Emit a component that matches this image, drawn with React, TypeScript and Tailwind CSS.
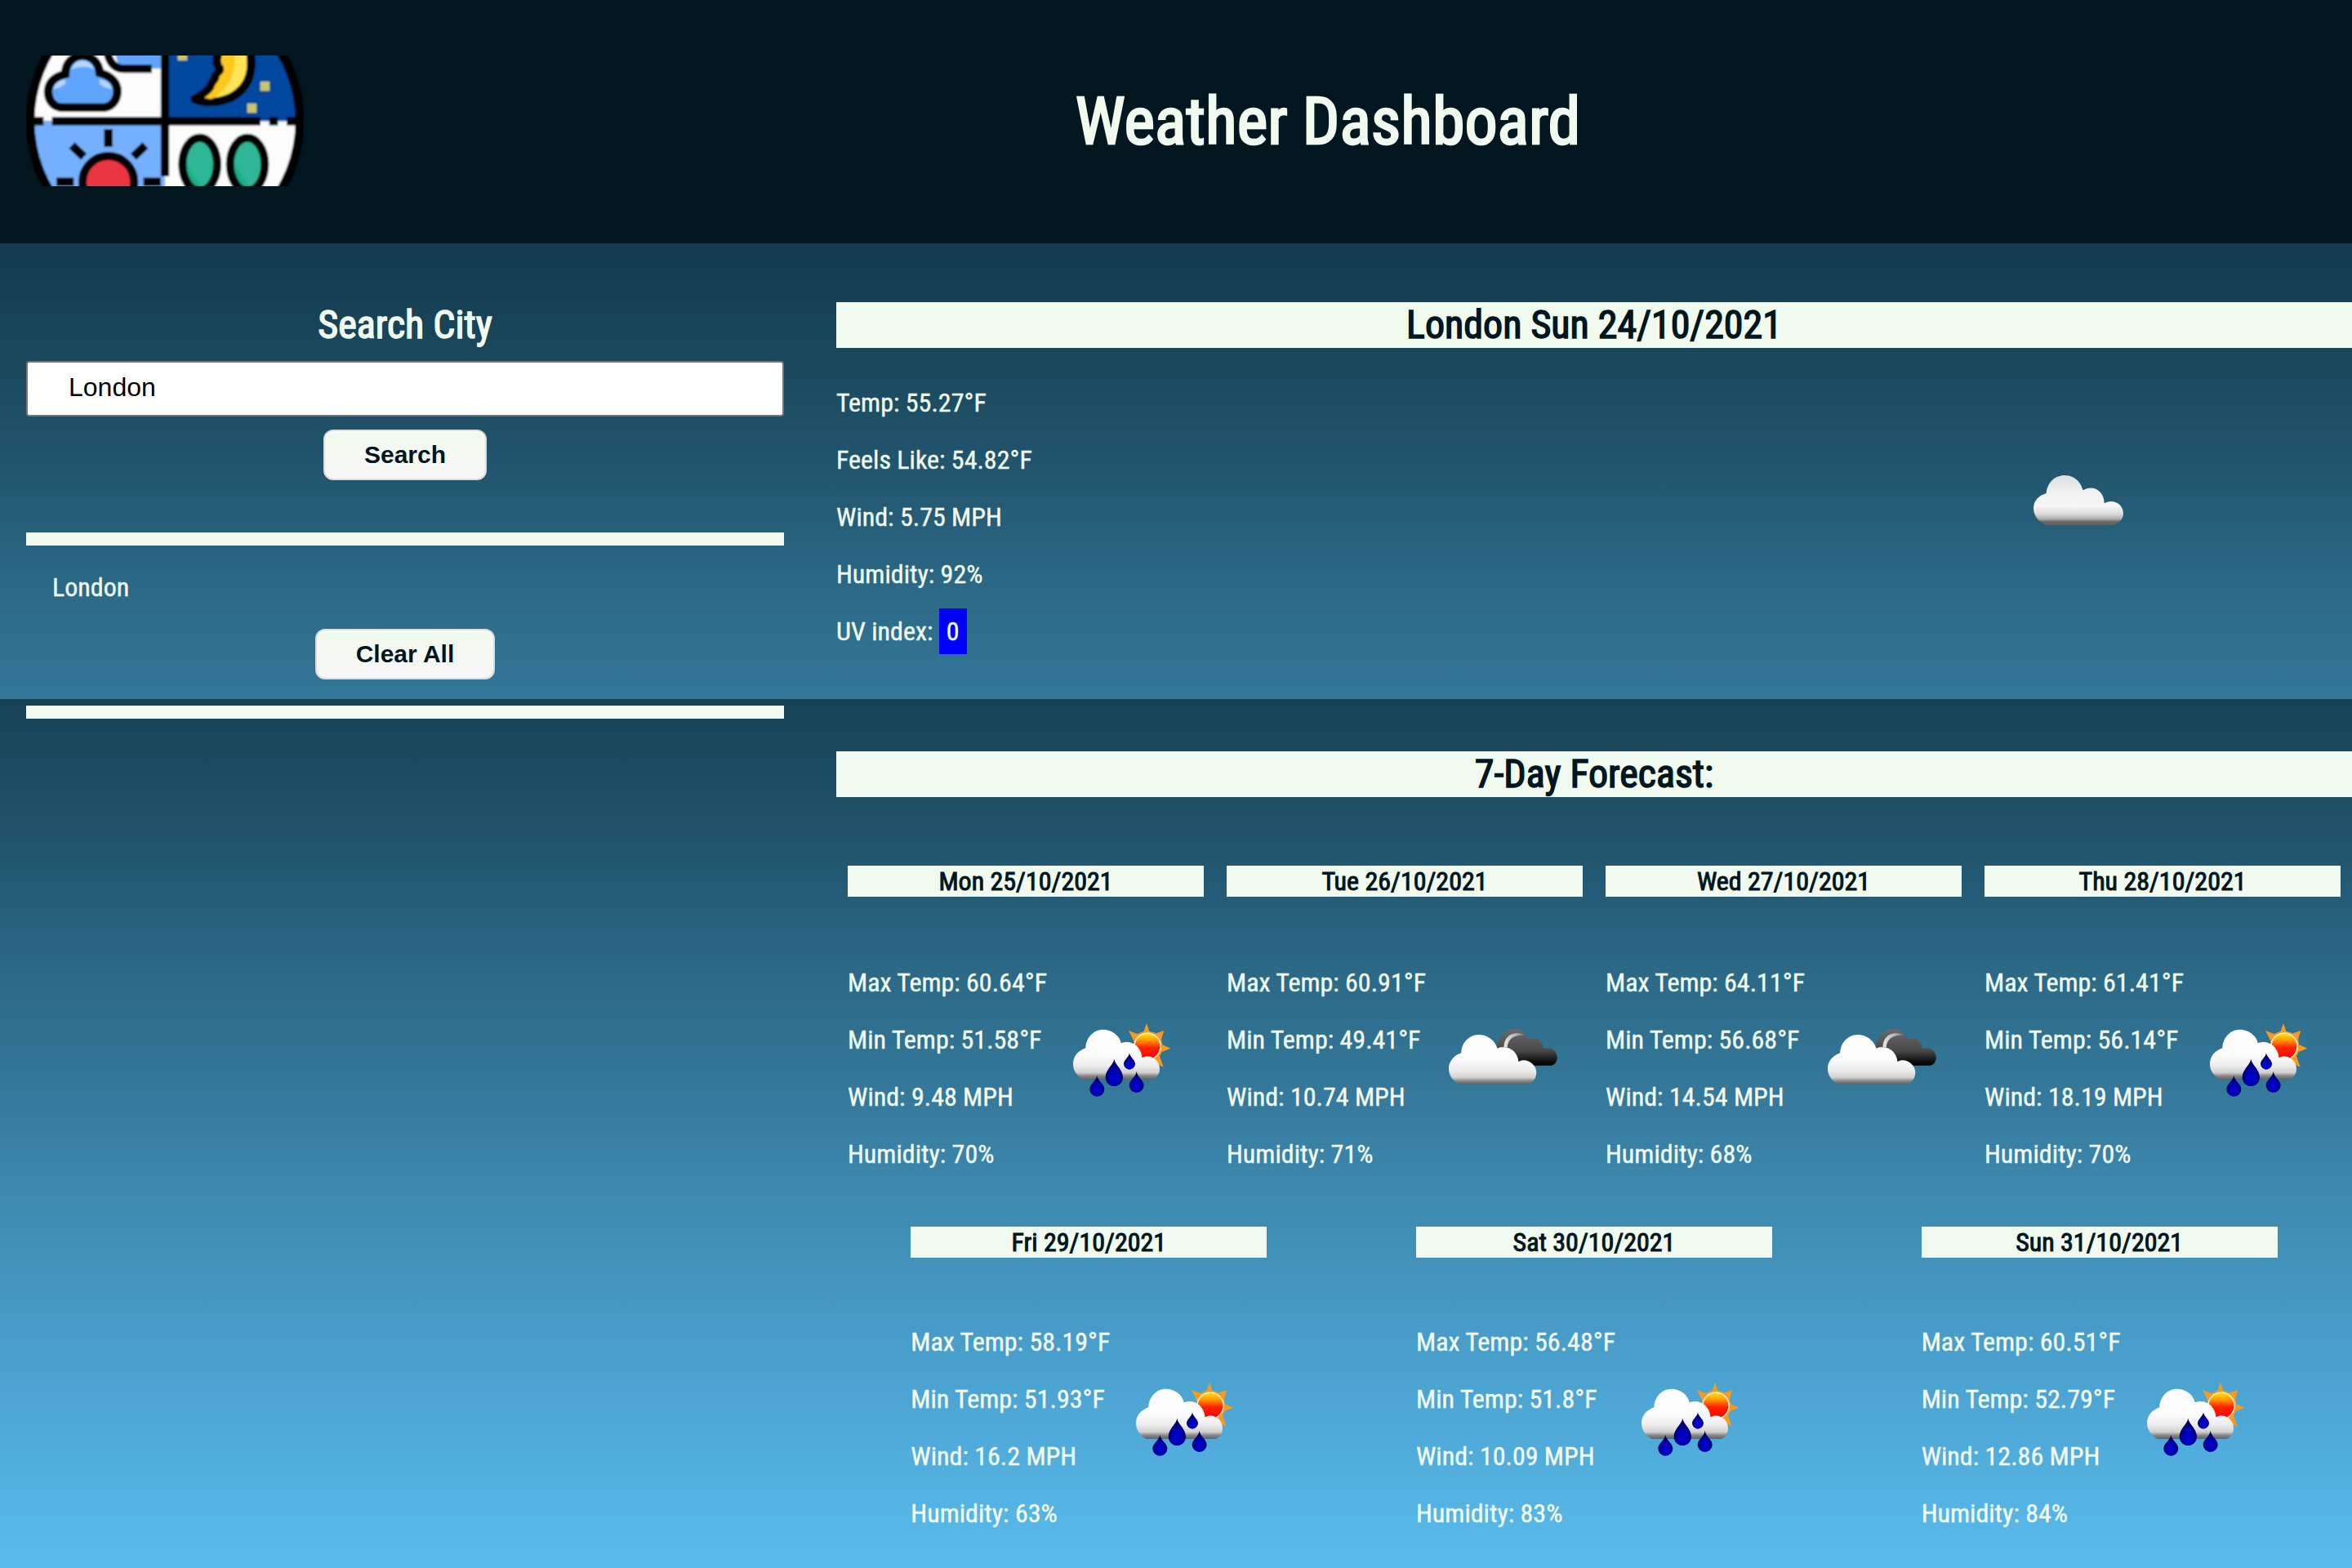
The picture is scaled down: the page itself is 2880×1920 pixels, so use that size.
import React from "react";

type IconKind = "rain" | "clouds";

interface Day {
  date: string;
  max: string;
  min: string;
  wind: string;
  humidity: string;
  icon: IconKind;
}

const firstRow: Day[] = [
  { date: "Mon 25/10/2021", max: "60.64", min: "51.58", wind: "9.48", humidity: "70", icon: "rain" },
  { date: "Tue 26/10/2021", max: "60.91", min: "49.41", wind: "10.74", humidity: "71", icon: "clouds" },
  { date: "Wed 27/10/2021", max: "64.11", min: "56.68", wind: "14.54", humidity: "68", icon: "clouds" },
  { date: "Thu 28/10/2021", max: "61.41", min: "56.14", wind: "18.19", humidity: "70", icon: "rain" },
];

const secondRow: Day[] = [
  { date: "Fri 29/10/2021", max: "58.19", min: "51.93", wind: "16.2", humidity: "63", icon: "rain" },
  { date: "Sat 30/10/2021", max: "56.48", min: "51.8", wind: "10.09", humidity: "83", icon: "rain" },
  { date: "Sun 31/10/2021", max: "60.51", min: "52.79", wind: "12.86", humidity: "84", icon: "rain" },
];

function Gradients() {
  return (
    <svg className="absolute h-0 w-0" aria-hidden="true">
      <defs>
        <linearGradient id="cloud" x1="0" y1="0" x2="0" y2="1">
          <stop offset="0" stopColor="#ffffff" />
          <stop offset="0.5" stopColor="#fbfbfb" />
          <stop offset="0.72" stopColor="#ececec" />
          <stop offset="0.86" stopColor="#cfcfcf" />
          <stop offset="0.93" stopColor="#858585" />
          <stop offset="1" stopColor="#606060" />
        </linearGradient>
        <linearGradient id="greyCloud" x1="0" y1="0" x2="0" y2="1">
          <stop offset="0" stopColor="#dedede" />
          <stop offset="0.35" stopColor="#f2f2f2" />
          <stop offset="0.62" stopColor="#f6f6f6" />
          <stop offset="0.78" stopColor="#d9d9d9" />
          <stop offset="0.88" stopColor="#aaaaaa" />
          <stop offset="0.93" stopColor="#696969" />
          <stop offset="1" stopColor="#606060" />
        </linearGradient>
        <linearGradient id="darkCloud" x1="0" y1="0" x2="0" y2="1">
          <stop offset="0" stopColor="#6a6a6a" />
          <stop offset="0.6" stopColor="#484848" />
          <stop offset="0.9" stopColor="#0c0c0c" />
          <stop offset="1" stopColor="#000000" />
        </linearGradient>
        <linearGradient id="sun" x1="0" y1="0" x2="0" y2="1">
          <stop offset="0" stopColor="#ffe000" />
          <stop offset="0.25" stopColor="#ff9a00" />
          <stop offset="0.55" stopColor="#ff2200" />
          <stop offset="1" stopColor="#ff0000" />
        </linearGradient>
        <linearGradient id="rim" x1="0" y1="0" x2="1" y2="0">
          <stop offset="0" stopColor="#e6e6e6" />
          <stop offset="0.6" stopColor="#b4b4b4" />
          <stop offset="1" stopColor="#707070" />
        </linearGradient>
        <radialGradient id="drop" cx="0.5" cy="0.68" r="0.5">
          <stop offset="0" stopColor="#0000d8" />
          <stop offset="0.6" stopColor="#0000b0" />
          <stop offset="1" stopColor="#00005c" />
        </radialGradient>
      </defs>
    </svg>
  );
}

function RainIcon() {
  return (
    <svg className="h-[140px] w-[180px] shrink-0 blur-[0.7px]" viewBox="12 -6 540 420">
      <path
        d="M342 38L352 68L377 76L406 66L396 98L400 118L430 131L398 144L390 160L404 200L376 186L300 120L292 98L276 66L308 78L332 68Z"
        fill="#f99a1c"
      />
      <circle cx="345" cy="124" r="51" fill="#f7e7c8" />
      <circle cx="345" cy="124" r="46" fill="url(#sun)" />
      <path
        d="M110 246C84 232 71 210 72 184C74 156 94 138 118 130C118 94 146 62 182 62C216 62 244 86 248 112C286 98 322 124 326 166C354 150 390 172 390 206C390 226 378 242 362 246Z"
        fill="url(#cloud)"
      />
      <g fill="url(#drop)">
        <path d="M223 170C226 192 255 208 255 238A32 32 0 0 1 191 238C191 208 220 192 223 170Z" />
        <path d="M279 148C281 164 300 174 300 188A21 21 0 0 1 258 188C258 174 277 164 279 148Z" />
        <path d="M160 230C162 250 187 262 187 281A27 27 0 0 1 133 281C133 262 158 250 160 230Z" />
        <path d="M305 215C307 236 332 248 332 267A27 27 0 0 1 278 267C278 248 303 236 305 215Z" />
      </g>
    </svg>
  );
}

function CloudsIcon() {
  return (
    <svg className="h-[140px] w-[180px] shrink-0 blur-[0.7px]" viewBox="24 -6 540 420">
      <path
        d="M246 132C256 84 282 60 316 60C342 60 356 78 362 96C390 86 418 100 420 132C446 124 470 140 470 164C470 182 460 192 446 194H330Z"
        fill="url(#darkCloud)"
      />
      <path d="M276 126C276 90 304 66 350 82C312 78 288 96 286 126Z" fill="url(#rim)" stroke="url(#rim)" strokeWidth="3" />
      <path
        d="M112 264C84 250 71 228 72 202C74 174 94 156 118 148C118 112 146 81 182 81C216 81 244 105 250 131C290 116 326 142 328 180C358 164 394 190 394 220C394 242 380 260 362 264Z"
        fill="url(#cloud)"
      />
    </svg>
  );
}

function GreyCloudIcon() {
  return (
    <svg className="h-[100px] w-[170px] shrink-0 blur-[0.7px]" viewBox="0 0 510 300">
      <path
        d="M138 249C108 238 90 214 90 186C91 158 110 140 137 132C140 94 168 66 204 66C238 66 264 88 271 121C308 98 350 122 350 169C386 150 420 174 420 206C420 226 404 244 382 249Z"
        fill="url(#greyCloud)"
      />
    </svg>
  );
}

function Logo() {
  return (
    <svg className="mb-0.5 h-[160px] w-[340px] shrink-0" viewBox="96 84 1020 480">
      <defs>
        <clipPath id="disc">
          <circle cx="606" cy="325" r="496" />
        </clipPath>
        <linearGradient id="pea" x1="0" y1="1" x2="0.7" y2="0.3">
          <stop offset="0.2" stopColor="#079a74" />
          <stop offset="0.5" stopColor="#2db796" />
        </linearGradient>
        <filter id="soft" x="0" y="0" width="1" height="1">
          <feGaussianBlur stdDeviation="3" />
        </filter>
      </defs>
      <g filter="url(#soft)">
        <g clipPath="url(#disc)">
          <rect x="96" y="40" width="510" height="285" fill="#fcfcfc" />
          <rect x="606" y="40" width="510" height="285" fill="#0047a0" />
          <rect x="96" y="325" width="510" height="285" fill="#75b0ff" />
          <rect x="606" y="325" width="510" height="285" fill="#fcfcfc" />
          <path d="M410 40H590V132H440Z" fill="#5ea5ff" />
          <path d="M392 60C400 110 420 133 456 133H558" fill="none" stroke="#000" strokeWidth="30" />
          <path
            d="M222 275C190 270 175 240 177 212C180 180 205 160 240 152C240 112 268 84 303 84C338 84 364 112 366 148C404 158 430 180 431 212C432 244 415 270 385 275Z"
            fill="#5ea5ff"
            stroke="#000"
            strokeWidth="31"
          />
          <path d="M262 136C268 114 284 102 303 102C322 102 338 114 346 136C326 122 286 122 262 136Z" fill="#b5d5ff" />
          <path d="M196 208C200 186 216 176 240 172V188L218 202Z" fill="#b5d5ff" />
          <path d="M410 208C406 186 392 176 366 172V188L388 202Z" fill="#b5d5ff" />
          <path
            d="M800 60C806 84 792 92 798 116C816 130 806 148 792 158C792 176 772 186 772 204C752 224 736 232 716 244C780 268 850 250 890 206C924 168 928 120 918 60Z"
            fill="#ffe454"
            stroke="#000"
            strokeWidth="31"
            strokeLinejoin="round"
          />
          <path
            d="M818 60C826 90 812 96 814 116C832 130 822 150 806 160C808 180 786 188 786 206C772 224 760 232 750 240L778 244C842 204 868 150 862 60Z"
            fill="#ffc81c"
          />
          <g fill="#c8c56a">
            <rect x="653" y="60" width="34" height="42" />
            <rect x="956" y="180" width="34" height="34" />
            <rect x="908" y="260" width="34" height="34" />
          </g>
          <g stroke="#000" strokeWidth="31" fill="none">
            <path d="M96 325H160M191 325H957M989 325H1021M1053 325H1116" />
            <path d="M606 40V528" />
            <path d="M398 355V420" />
            <path d="M264 414L308 456M534 414L490 456" />
            <path d="M207 548H271M527 548H591" />
          </g>
          <circle cx="398" cy="548" r="95" fill="#ea3542" stroke="#000" strokeWidth="30" />
          <ellipse cx="734" cy="484" rx="64" ry="98" fill="url(#pea)" stroke="#000" strokeWidth="30" />
          <ellipse cx="909" cy="484" rx="64" ry="98" fill="url(#pea)" stroke="#000" strokeWidth="30" />
        </g>
        <circle cx="606" cy="325" r="495" fill="none" stroke="#000" strokeWidth="32" />
      </g>
    </svg>
  );
}

function Button({ children }: { children: React.ReactNode }) {
  return (
    <button className="h-[62px] rounded-xl border-2 border-[#dcdcdc] bg-linear-to-b from-[#f1faee] to-[#f6f6f6] px-12 font-['Liberation_Sans',Arial,sans-serif] text-[30px] leading-[34px] font-bold text-[#01161e] shadow-[inset_0_2px_0_0_#ffffff] [-webkit-text-stroke:0] [text-shadow:0_2px_0_#ffffff]">
      {children}
    </button>
  );
}

function DayCard({ day }: { day: Day }) {
  return (
    <article className="w-[436px]">
      <h4 className="h-[38px] bg-[#f1faee] text-center text-[32px] leading-[38px] text-[#01161e] [-webkit-text-stroke:1px_#01161e]">
        {day.date}
      </h4>
      <div className="flex items-center">
        <div className="flex w-[256px] flex-col gap-8 text-[32px] leading-[38px] whitespace-nowrap">
          <p>Max Temp: {day.max}°F</p>
          <p>Min Temp: {day.min}°F</p>
          <p>Wind: {day.wind} MPH</p>
          <p>Humidity: {day.humidity}%</p>
        </div>
        {day.icon === "rain" ? <RainIcon /> : <CloudsIcon />}
      </div>
    </article>
  );
}

export default function App() {
  return (
    <div className="h-[1920px] w-[2880px] overflow-hidden bg-[linear-gradient(to_bottom,#133a4e_298px,#19475b_430px,#22566f_580px,#2b6986_720px,#347799_856px,#174255_856px,#19475b_900px,#22566f_1050px,#2b6986_1190px,#347799_1326px,#3e8bb2_1480px,#4da6d4_1720px,#59bcec_1920px)] font-['Roboto_Condensed',Roboto,sans-serif] text-[#f1faee] font-stretch-condensed [-webkit-text-stroke:0.4px]">
      <Gradients />
      <header className="flex h-[298px] items-center bg-[#01161e] pl-8">
        <Logo />
        <h1 className="flex-1 text-center text-[80px] leading-[94px] [-webkit-text-stroke:2.5px_#f1faee]">
          Weather Dashboard
        </h1>
      </header>
      <div className="flex">
        <aside className="flex w-[992px] flex-col items-center px-8 pt-[72px]">
          <h2 className="text-[48px] leading-[56px] [-webkit-text-stroke:1.5px_#f1faee]">Search City</h2>
          <input
            className="mt-4 h-[68px] w-full rounded-[4px] border-2 border-[#767676] bg-white px-[50px] pb-[3px] font-['Liberation_Sans',Arial,sans-serif] text-[32px] text-black [-webkit-text-stroke:0]"
            defaultValue="London"
          />
          <div className="mt-4 flex">
            <Button>Search</Button>
          </div>
          <div className="mt-16 h-4 w-full bg-[#f1faee]" />
          <p className="mt-8 w-full pl-8 text-[32px] leading-[38px]">London</p>
          <div className="mt-8 flex">
            <Button>Clear All</Button>
          </div>
          <div className="mt-8 h-4 w-full bg-[#f1faee]" />
        </aside>
        <main className="ml-8 flex-1 pt-[72px]">
          <section className="h-[550px]">
            <h2 className="bg-[#f1faee] text-center text-[48px] leading-[56px] text-[#01161e] [-webkit-text-stroke:1.5px_#01161e]">
              London Sun 24/10/2021
            </h2>
            <div className="flex justify-between pt-12 pr-[250px]">
              <div className="flex flex-col gap-8 text-[32px] leading-[38px]">
                <p>Temp: 55.27°F</p>
                <p>Feels Like: 54.82°F</p>
                <p>Wind: 5.75 MPH</p>
                <p>Humidity: 92%</p>
                <p>
                  UV index: <span className="bg-[#0000ff] p-[9px]">0</span>
                </p>
              </div>
              <div className="pt-[86px]">
                <GreyCloudIcon />
              </div>
            </div>
          </section>
          <section>
            <h2 className="bg-[#f1faee] text-center text-[48px] leading-[56px] text-[#01161e] [-webkit-text-stroke:1.5px_#01161e]">
              7-Day Forecast:
            </h2>
            <div className="mt-[84px] flex justify-around [&_h4]:mb-[86px]">
              {firstRow.map((d) => (
                <DayCard key={d.date} day={d} />
              ))}
            </div>
            <div className="mt-[70px] flex justify-around [&_h4]:mb-[84px]">
              {secondRow.map((d) => (
                <DayCard key={d.date} day={d} />
              ))}
            </div>
          </section>
        </main>
      </div>
    </div>
  );
}
